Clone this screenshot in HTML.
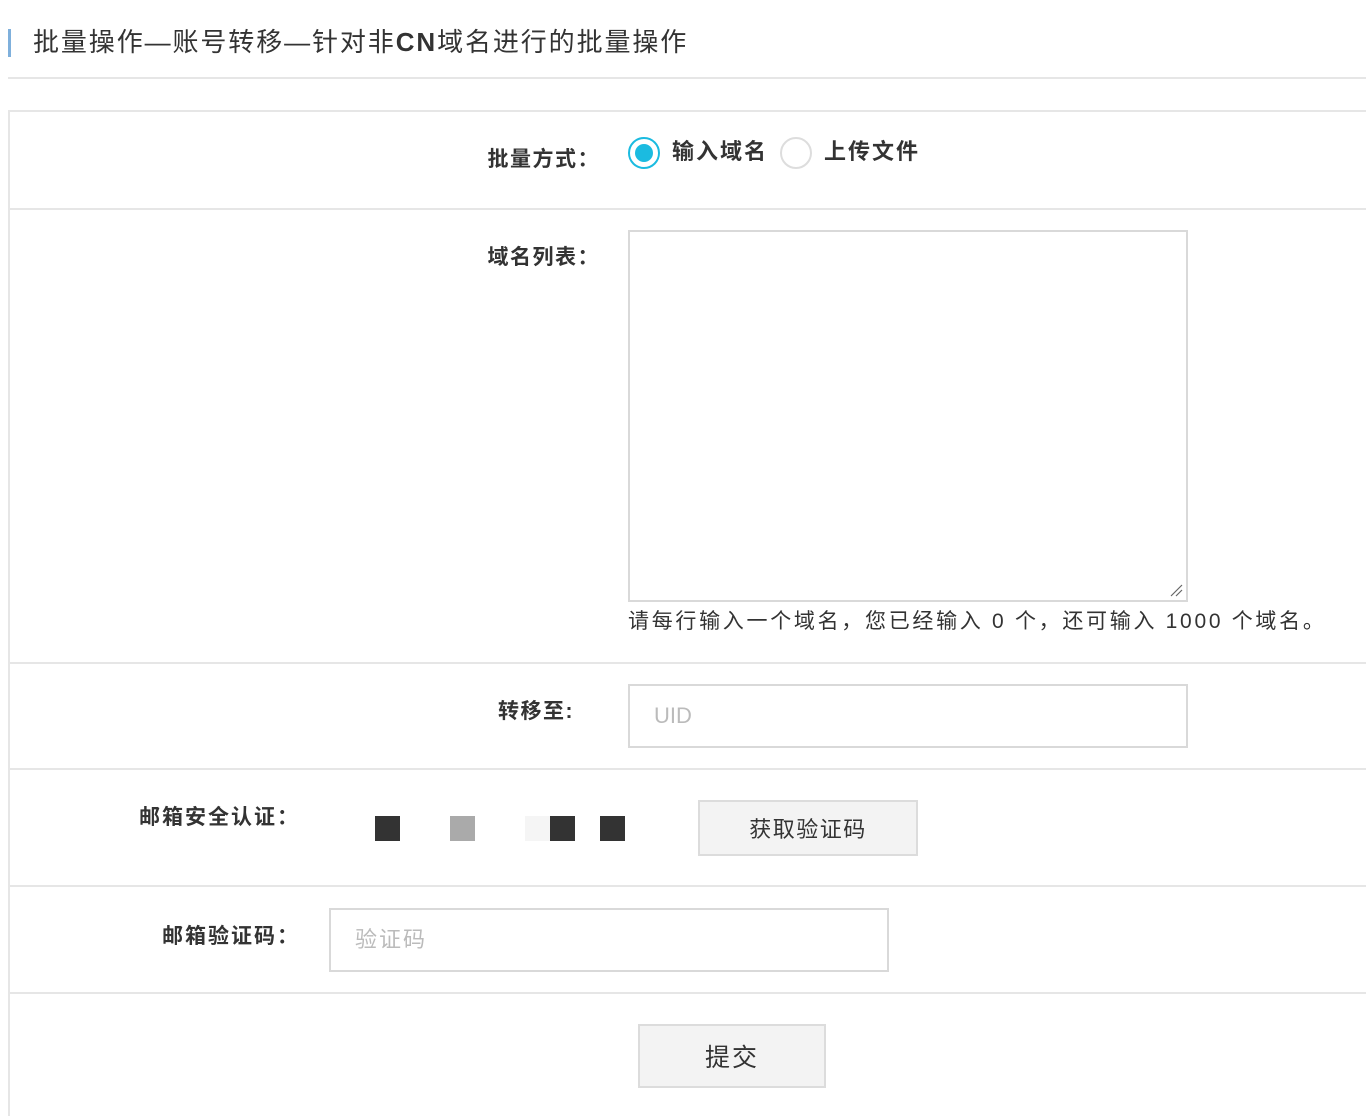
<!DOCTYPE html>
<html><head><meta charset="utf-8"><style>
*{margin:0;padding:0;box-sizing:border-box}
body{width:1366px;height:1116px;background:#fff;position:relative;overflow:hidden;font-family:"Liberation Sans","Noto Sans CJK SC",sans-serif;color:#333}
.a{position:absolute;white-space:nowrap}
.hl{position:absolute;left:8px;height:2px;background:#e6e6e6;right:0}
.lbl{position:absolute;font-weight:bold;font-size:21px;line-height:30px;text-align:right;letter-spacing:1.5px;white-space:nowrap}
.box{position:absolute;border:2px solid #d9d9d9;background:#fff}
.btn{position:absolute;border:2px solid #dcdcdc;background:#f3f3f3;text-align:center}
.sq{position:absolute;top:816px;width:25px;height:25px}
</style></head><body>
<div class="a" style="left:8px;top:29px;width:3px;height:28px;background:#7fb0dc"></div>
<div class="a" style="left:33px;top:26px;font-size:26px;line-height:32px;color:#333;letter-spacing:1.9px">批量操作—账号转移—针对非<b>CN</b>域名进行的批量操作</div>
<div class="hl" style="top:77px"></div>
<div class="a" style="left:8px;top:110px;width:2px;height:1006px;background:#e6e6e6"></div>
<div class="hl" style="top:110px"></div>
<div class="hl" style="top:208px"></div>
<div class="hl" style="top:662px"></div>
<div class="hl" style="top:768px"></div>
<div class="hl" style="top:885px"></div>
<div class="hl" style="top:992px"></div>

<div class="lbl" style="right:766px;top:145px">批量方式：</div>
<div class="a" style="left:628px;top:137px;width:32px;height:32px;border:2px solid #1bbbe0;border-radius:50%"></div>
<div class="a" style="left:635px;top:144px;width:18px;height:18px;background:#1bbbe0;border-radius:50%"></div>
<div class="a" style="left:672px;top:137px;font-size:22px;font-weight:bold;line-height:30px;letter-spacing:2px">输入域名</div>
<div class="a" style="left:780px;top:137px;width:32px;height:32px;border:2px solid #ddd;border-radius:50%"></div>
<div class="a" style="left:824px;top:137px;font-size:22px;font-weight:bold;line-height:30px;letter-spacing:2px">上传文件</div>

<div class="lbl" style="right:766px;top:243px">域名列表：</div>
<div class="box" style="left:628px;top:230px;width:560px;height:372px"></div>
<svg class="a" style="left:1168px;top:582px" width="16" height="16"><path d="M3 14L14 3M8 14L14 8" stroke="#666" stroke-width="1.2"/></svg>
<div class="a" style="left:628px;top:607px;font-size:21px;line-height:30px;letter-spacing:2.7px">请每行输入一个域名，您已经输入 0 个，还可输入 1000 个域名。</div>

<div class="lbl" style="right:792px;top:697px">转移至:</div>
<div class="box" style="left:628px;top:684px;width:560px;height:64px"></div>
<div class="a" style="left:654px;top:701px;font-size:22px;line-height:30px;color:#bbb">UID</div>

<div class="lbl" style="right:1066px;top:803px;letter-spacing:2px">邮箱安全认证：</div>
<div class="sq" style="left:375px;background:#333"></div>
<div class="sq" style="left:450px;background:#aaa"></div>
<div class="sq" style="left:525px;background:#f5f5f5"></div>
<div class="sq" style="left:550px;background:#333"></div>
<div class="sq" style="left:600px;background:#333"></div>
<div class="btn" style="left:698px;top:800px;width:220px;height:56px;font-size:22px;line-height:56px;letter-spacing:1.5px">获取验证码</div>

<div class="lbl" style="right:1066px;top:922px;letter-spacing:2px">邮箱验证码：</div>
<div class="box" style="left:329px;top:908px;width:560px;height:64px"></div>
<div class="a" style="left:355px;top:925px;font-size:22px;line-height:30px;color:#bbb;letter-spacing:2px">验证码</div>

<div class="btn" style="left:638px;top:1024px;width:188px;height:64px;font-size:25px;line-height:64px;letter-spacing:2px">提交</div>
</body></html>
